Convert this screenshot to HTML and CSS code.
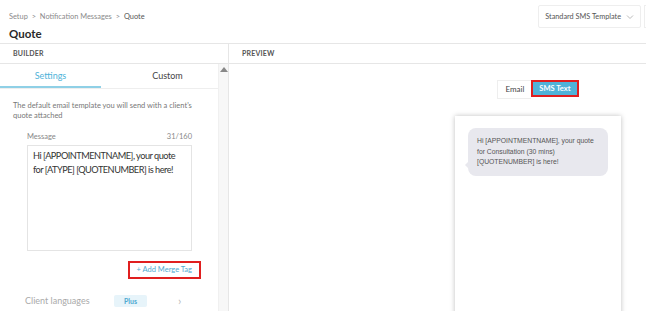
FILE: index.html
```html
<!doctype html>
<html>
  <head>
    <title>Quote</title>
    <link rel="stylesheet" href="styles.css">
  </head>
  <body>
    <div class='topbar'>
      <div class='heading'>
        <div class='crumbs'>Setup <span class='sep'>&gt;</span> Notification Messages <span class='sep'>&gt;</span> <span class='here'>Quote</span></div>
        <h1>Quote</h1>
      </div>
      <div class='actions'>
        <div class='template'>Standard SMS Template
          <svg width='8' height='6' viewBox='0 0 8 6'><path d='M1 1.5 L4 4.5 L7 1.5' fill='none' stroke='#bbb' stroke-width='1'/></svg>
        </div>
        <div class='stub'></div>
      </div>
    </div>
    <div class='main'>
      <div class='builder'>
        <div class='colhead'>BUILDER</div>
        <div class='scrollwrap'>
          <div class='panel'>
            <div class='tabs'>
              <div class='tab active'>Settings</div>
              <div class='tab'>Custom</div>
            </div>
            <p class='desc'>The default email template you will send with a client's quote attached</p>
            <div class='field'>
              <div class='label'><span>Message</span><span>31/160</span></div>
              <div class='textarea'>Hi [APPOINTMENTNAME], your quote for [ATYPE] [QUOTENUMBER] is here!</div>
              <div class='mergerow'><span class='merge'>+ Add Merge Tag</span></div>
            </div>
            <div class='langs'>
              <span class='langlabel'>Client languages</span>
              <span class='plus'>Plus</span>
              <span class='chev'>&#8250;</span>
            </div>
          </div>
          <div class='scrollbar'><div class='arrow'></div></div>
        </div>
      </div>
      <div class='preview'>
        <div class='colhead'>PREVIEW</div>
        <div class='stage'>
          <div class='toggle'>
            <span class='opt'>Email</span>
            <span class='opt on'>SMS Text</span>
          </div>
          <div class='phone'>
            <div class='bubble'>Hi [APPOINTMENTNAME], your quote for Consultation (30 mins) [QUOTENUMBER] is here!</div>
          </div>
        </div>
      </div>
    </div>
  </body>
</html>
```

FILE: styles.css
```css
body {
  margin:             0;
  background-color:   #fff;
  font-family:        Lato, "Open Sans", sans-serif;
  color:              #333;
  overflow:           hidden;
  height:             311px;
}
.topbar {
  display:            flex;
  justify-content:    space-between;
  height:             43px;
  border-bottom:      1px solid #e6e6e6;
}
.heading {
  padding:            12px 0 0 9px;
}
.crumbs {
  font-size:          7.4px;
  color:              #8a8a8a;
  line-height:        10px;
}
.crumbs .sep {
  margin:             0 2px;
}
.crumbs .here {
  color:              #555;
}
h1 {
  margin:             5px 0 0 0;
  font-size:          11.5px;
  font-weight:        bold;
  color:              #2a2a2a;
  line-height:        14px;
}
.actions {
  display:            flex;
  gap:                3px;
  padding-top:        5px;
}
.template {
  display:            flex;
  align-items:        center;
  gap:                5px;
  height:             21px;
  padding:            0 6px 0 6px;
  border:             1px solid #eee;
  border-radius:      2px;
  font-size:          7.3px;
  color:              #555;
}
.stub {
  width:              1px;
  height:             21px;
  border:             1px solid #eee;
  border-right:       none;
}
.main {
  display:            flex;
  height:             267px;
}
.builder {
  width:              228px;
  border-right:       1px solid #e6e6e6;
  display:            flex;
  flex-direction:     column;
}
.colhead {
  height:             19px;
  line-height:        19px;
  border-bottom:      1px solid #e6e6e6;
  font-size:          7px;
  font-weight:        bold;
  color:              #555;
  padding-left:       13px;
  letter-spacing:     0.2px;
}
.scrollwrap {
  display:            flex;
  flex:               1;
}
.panel {
  width:              219px;
}
.scrollbar {
  width:              9px;
  background-color:   #f7f7f7;
  border-left:        1px solid #f0f0f0;
}
.arrow {
  width:              0;
  height:             0;
  margin:             3px 0 0 1px;
  border-left:        4px solid transparent;
  border-right:       4px solid transparent;
  border-bottom:      5px solid #888;
}
.tabs {
  display:            flex;
  height:             24px;
  border-bottom:      1px solid #eee;
}
.tab {
  flex:               1;
  text-align:         center;
  font-size:          9px;
  line-height:        23px;
  color:              #444;
}
.tab.active {
  flex:               0 0 101px;
  color:              #4fb3d9;
  border-bottom:      2px solid #8fd0e6;
  height:             22px;
}
.tab + .tab {
  padding-left:       16px;
}
.desc {
  margin:             12px 10px 0 13px;
  font-size:          7.5px;
  line-height:        10px;
  color:              #777;
}
.field {
  margin:             11px 26px 0 27px;
}
.label {
  display:            flex;
  justify-content:    space-between;
  font-size:          7.5px;
  color:              #888;
  line-height:        10px;
}
.textarea {
  margin-top:         3px;
  height:             98px;
  border:             1px solid #e4e4e4;
  padding:            3px 5px;
  font-size:          9.2px;
  letter-spacing:     -0.5px;
  line-height:        14px;
  color:              #333;
}
.mergerow {
  display:            flex;
  justify-content:    flex-end;
  margin:             10px -9px 0 0;
}
.merge {
  border:             2px solid #e01f1f;
  padding:            1px 7px;
  height:             12px;
  font-size:          7.5px;
  line-height:        12px;
  color:              #4fa9d0;
}
.langs {
  display:            flex;
  align-items:        center;
  margin:             14px 0 0 25px;
  font-size:          9px;
  color:              #aaa;
}
.langlabel {
  width:              89px;
}
.plus {
  background-color:   #e7f4fa;
  color:              #4fa9d0;
  font-size:          7px;
  font-weight:        bold;
  padding:            2px 10px;
  border-radius:      2px;
}
.chev {
  margin-left:        31px;
  font-size:          12px;
  color:              #bbb;
}
.preview {
  flex:               1;
  display:            flex;
  flex-direction:     column;
}
.stage {
  display:            flex;
  flex-direction:     column;
  align-items:        center;
  padding:            16px 0 0 201px;
}
.toggle {
  display:            flex;
}
.opt {
  height:             17px;
  line-height:        17px;
  font-size:          8px;
  padding:            0 7px;
  color:              #444;
  border:             1px solid #eee;
  border-right:       none;
}
.opt.on {
  background-color:   #4fb3d9;
  color:              #fff;
  font-weight:        bold;
  font-size:          7.5px;
  border:             2px solid #e01f1f;
  height:             13px;
  line-height:        13px;
  padding:            0 6px;
}
.phone {
  margin-top:         17px;
  width:              166px;
  height:             200px;
  background-color:   #fff;
  box-shadow:         0 0 5px rgba(0, 0, 0, 0.25);
  padding-top:        12px;
  box-sizing:         border-box;
}
.bubble {
  position:           relative;
  margin:             0 13px 0 13px;
  background-color:   #e8e8ee;
  border-radius:      8px;
  padding:            8px 9px;
  font-family:        "Liberation Sans", Arial, sans-serif;
  font-size:          6.8px;
  line-height:        10.5px;
  color:              #555;
}
.bubble::after {
  content:            '';
  position:           absolute;
  left:               -3px;
  bottom:             8px;
  border-top:         3px solid transparent;
  border-bottom:      3px solid transparent;
  border-right:       3px solid #e8e8ee;
}
```
